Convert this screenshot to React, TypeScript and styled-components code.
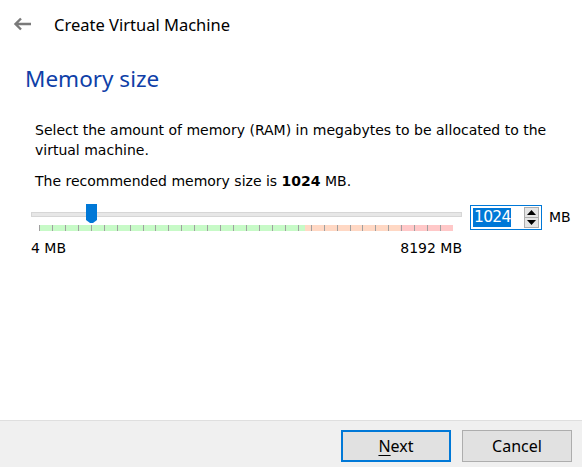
import React from "react";
import styled, { createGlobalStyle } from "styled-components";

const Global = createGlobalStyle`
  html, body { margin: 0; padding: 0; background: #ffffff; }
  #root { width: 582px; height: 467px; }
`;

const Window = styled.div`
  width: 582px;
  height: 467px;
  display: flex;
  flex-direction: column;
  background: #ffffff;
  overflow: hidden;
`;

const Header = styled.div`
  height: 48px;
  display: flex;
  align-items: center;
  padding-left: 13px;
  gap: 22px;
`;

const BackButton = styled.div`
  width: 19px;
  height: 14px;
  display: flex;
  margin-top: -1px;
`;

const Title = styled.div`
  font-family: "Noto Sans", "Open Sans", sans-serif;
  font-size: 16.5px;
  color: #000000;
`;

const Body = styled.div`
  flex: 1;
  display: flex;
  flex-direction: column;
`;

const PageTitle = styled.div`
  font-family: "Noto Sans", "Open Sans", sans-serif;
  font-size: 22.5px;
  color: #0f3fa8;
  padding-left: 25px;
  margin-top: 15px;
  line-height: 32px;
`;

const Text = styled.p<{ $top: number }>`
  margin: ${(p) => p.$top}px 0 0 35px;
  width: 530px;
  font-family: "DejaVu Sans", sans-serif;
  font-size: 14px;
  line-height: 20px;
  color: #000000;
`;

const SliderRow = styled.div`
  display: flex;
  align-items: flex-start;
  margin-top: 13px;
  padding-left: 31px;
`;

const SliderCol = styled.div`
  width: 431px;
  display: flex;
  flex-direction: column;
`;

const SliderArea = styled.div`
  position: relative;
  height: 28px;
`;

const Track = styled.div`
  position: absolute;
  left: 0;
  right: 0;
  top: 8px;
  height: 3px;
  background: #e7e7e7;
  border: 1px solid #d6d6d6;
`;

const Band = styled.div`
  position: absolute;
  left: 8px;
  width: 414px;
  top: 21px;
  height: 6px;
  display: flex;
`;

const Zone = styled.div<{ $color: string }>`
  background: ${(p) => p.$color};
`;

const Tick = styled.div`
  position: absolute;
  top: 0;
  width: 1px;
  height: 6px;
  background: #a0a0a0;
`;

const Thumb = styled.svg`
  position: absolute;
  top: 0;
`;

const Scale = styled.div`
  display: flex;
  justify-content: space-between;
  margin-top: 7px;
  font-family: "DejaVu Sans", sans-serif;
  font-size: 14px;
  line-height: 18px;
  color: #000;
`;

const SpinBox = styled.div`
  margin-left: 8px;
  margin-top: 1px;
  width: 66px;
  height: 23px;
  border: 1px solid #0078d7;
  display: flex;
  align-items: center;
  padding: 0 2px;
  box-sizing: content-box;
`;

const SpinValue = styled.span`
  background: #0078d7;
  color: #ffffff;
  font-family: "DejaVu Sans", sans-serif;
  font-size: 15.5px;
  line-height: 19px;
  padding: 0 1px;
  width: 36px;
  letter-spacing: -0.7px;
`;

const SpinButtons = styled.div`
  margin-left: auto;
  width: 15px;
  height: 21px;
  display: flex;
  flex-direction: column;
`;

const SpinButton = styled.div`
  flex: 1;
  border: 1px solid #adadad;
  background: #e5e5e5;
  display: flex;
  align-items: center;
  justify-content: center;
  & + & { border-top: none; }
`;

const Unit = styled.span`
  margin-left: 7px;
  margin-top: 4px;
  font-family: "DejaVu Sans", sans-serif;
  font-size: 14px;
  line-height: 18px;
`;

const Footer = styled.div`
  height: 47px;
  box-sizing: border-box;
  border-top: 1px solid #dfdfdf;
  background: #f0f0f0;
  display: flex;
  justify-content: flex-end;
  align-items: flex-start;
  gap: 11px;
  padding: 9px 10px 0 0;
`;

const Button = styled.button<{ $default?: boolean }>`
  width: 110px;
  height: 32px;
  box-sizing: border-box;
  border: ${(p) => (p.$default ? "2px solid #0078d7" : "1px solid #adadad")};
  background: #e1e1e1;
  font-family: "Noto Sans", "Open Sans", sans-serif;
  font-size: 16px;
  color: #000;
  padding: 0;
  u { text-decoration: underline; text-underline-offset: 3px; }
`;

const MIN = 4;
const MAX = 8192;
const value = 1024;
const BAND = 414;

export default function App() {
  const frac = (value - MIN) / (MAX - MIN);
  const thumbX = 8 + frac * BAND - 5;
  const ticks = Array.from({ length: 33 }, (_, i) => Math.round((i * BAND) / 32));
  return (
    <Window>
      <Global />
      <Header>
        <BackButton>
          <svg width="19" height="14" viewBox="0 0 19 14">
            <path d="M18 7H2.5M8 1.5L2.5 7L8 12.5" fill="none" stroke="#7a7a7a" strokeWidth="2.4" />
          </svg>
        </BackButton>
        <Title>Create Virtual Machine</Title>
      </Header>
      <Body>
        <PageTitle>Memory size</PageTitle>
        <Text $top={25}>
          Select the amount of memory (RAM) in megabytes to be allocated to the virtual machine.
        </Text>
        <Text $top={11}>
          The recommended memory size is <b>1024</b> MB.
        </Text>
        <SliderRow>
          <SliderCol>
            <SliderArea>
              <Track />
              <Band>
                <Zone $color="#c7fac7" style={{ width: 266 }} />
                <Zone $color="#ffd8c4" style={{ width: 95 }} />
                <Zone $color="#ffc8c8" style={{ width: 53 }} />
                {ticks.slice(1, 32).map((t) => (
                  <Tick key={t} style={{ left: t }} />
                ))}
                <Tick style={{ left: 0 }} />
              </Band>
              <Thumb style={{ left: thumbX }} width="11" height="20" viewBox="0 0 11 20">
                <path d="M0 0H11V16L7 19H4L0 16Z" fill="#0078d7" />
              </Thumb>
            </SliderArea>
            <Scale>
              <span>4 MB</span>
              <span>8192 MB</span>
            </Scale>
          </SliderCol>
          <SpinBox>
            <SpinValue>1024</SpinValue>
            <SpinButtons>
              <SpinButton>
                <svg width="9" height="5" viewBox="0 0 9 5"><path d="M4.5 0L9 5H0Z" fill="#000" /></svg>
              </SpinButton>
              <SpinButton>
                <svg width="9" height="5" viewBox="0 0 9 5"><path d="M0 0H9L4.5 5Z" fill="#000" /></svg>
              </SpinButton>
            </SpinButtons>
          </SpinBox>
          <Unit>MB</Unit>
        </SliderRow>
      </Body>
      <Footer>
        <Button $default>
          <u>N</u>ext
        </Button>
        <Button>Cancel</Button>
      </Footer>
    </Window>
  );
}
